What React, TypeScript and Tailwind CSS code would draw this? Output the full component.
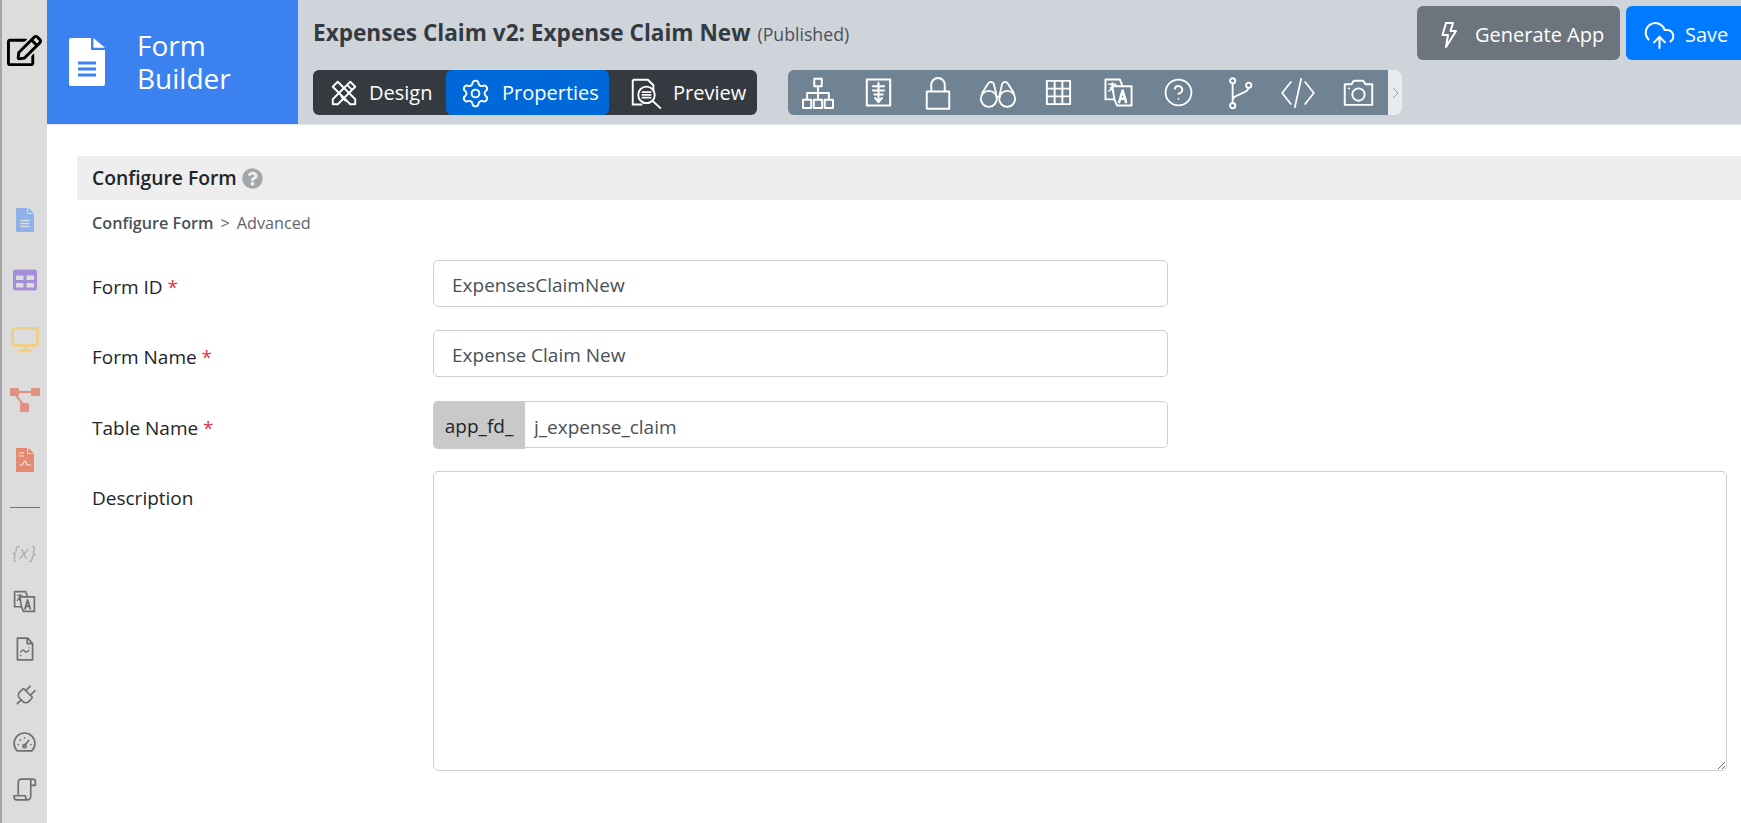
import { CircleHelp, CloudUpload, Plug, Settings } from 'lucide-react';
import { FaQuestionCircle, FaRegEdit, FaTable } from 'react-icons/fa';
import type { ReactNode } from 'react';

const font = { fontFamily: '"Open Sans", "Noto Sans", sans-serif' };

const Line = ({ size = 28, sw = 1.6, children }: { size?: number; sw?: number; children: ReactNode }) => (
  <svg width={size} height={size} viewBox="0 0 24 24" fill="none" stroke="currentColor" strokeWidth={sw} strokeLinecap="round" strokeLinejoin="round">
    {children}
  </svg>
);

const FileIcon = ({ size, color, lines }: { size: number; color: string; lines: string }) => (
  <svg width={size * 0.75} height={size} viewBox="0 0 18 24">
    <path d="M0 1a1 1 0 0 1 1-1h10v6h7v17a1 1 0 0 1-1 1H1a1 1 0 0 1-1-1z" fill={color} />
    <path d="M12.2 0 18 4.9H12.2z" fill={color} />
    <path d="M4.5 12.5h9M4.5 15.5h9M4.5 18.5h9" stroke={lines} strokeWidth="1.5" />
  </svg>
);

const Translate = ({ size = 28, sw = 1.5 }: { size?: number; sw?: number }) => (
  <Line size={size} sw={sw}>
    <path d="M9 17H2.500V2.500H13L15 7.500" />
    <path d="M9 17 7.500 7.500H21.500V21.500H11z" />
    <path d="M5 6h5M7.500 5v1.500c0 2-1 3.500-2.500 4.500M6 8.500c.8 1.200 1.500 2 2.500 2.500" strokeWidth="1.100" />
    <path d="M12.500 19l2.500-8.500 2.500 8.500M13.500 16.500h3.500" strokeWidth="1.800" />
  </Line>
);

const sidebarTop: ReactNode[] = [
  <FileIcon size={24} color="#8fb2ea" lines="#dcdcdc" />,
  <FaTable size={24} color="#a48fd6" />,
  <svg width="28" height="26" viewBox="0 0 28 26" fill="none"><rect x="1.500" y="1.500" width="25" height="17" rx="2" stroke="#efcf88" strokeWidth="3" /><path d="M14 19v4M7 24h14" stroke="#efcf88" strokeWidth="3" /></svg>,
  <svg width="30" height="26" viewBox="0 0 30 26" fill="#e39084"><rect x="0" y="1" width="9" height="8" rx="1" /><rect x="21" y="1" width="9" height="8" rx="1" /><rect x="10" y="16" width="9" height="9" rx="1" /><path d="M8 4h14v2H8zM7 8l7 9-1.600 1.200-7-9z" /></svg>,
  <svg width="18" height="24" viewBox="0 0 18 24"><path d="M0 0h11v6h7v18H0z" fill="#e38a72" /><path d="M12.200 0 18 4.900h-5.800z" fill="#e38a72" /><path d="M3 5h5M3 8h5M3 17h3c1.500 0 1.500-4 3-4s1 4 2.500 4H15" stroke="#f7e4de" strokeWidth="1.200" fill="none" /></svg>,
];

const sidebarBottom: ReactNode[] = [
  <span className="text-[19px] font-light italic tracking-[1px] text-[#9a9a9a]">{'{x}'}</span>,
  <span className="text-[#6f6f6f]"><Translate size={25} sw={1.600} /></span>,
  <span className="text-[#6f6f6f]"><Line size={26} sw={1.600}><path d="M5 2h9.500L19 7v15H5zM14 2v5h5" /><path d="M8 15c1.500-2.500 2.500-2.500 3.500-1s2 1 4 -.5M15.500 11h.1M8 18h.1" strokeWidth="1.300" /></Line></span>,
  <span className="text-[#6f6f6f]"><Plug size={26} strokeWidth={1.500} className="rotate-45" /></span>,
  <span className="text-[#6f6f6f]"><Line size={25} sw={1.600}><path d="M5 20a10 10 0 1 1 14 0z" /><path d="M12 15l4-5M6 14h.1M8 9.500h.1M12 7.500h.1M18 14h.1" /><circle cx="12" cy="15.500" r="1.500" /></Line></span>,
  <span className="text-[#6f6f6f]"><Line size={25} sw={1.600}><path d="M6 18V5a3 3 0 0 1 3-3h11a2.500 2.500 0 0 1 2.500 2.500V8H18M20 2a2 2 0 0 0-2 2v14.500a3.500 3.500 0 0 1-3.500 3.500H4.500A2.500 2.500 0 0 1 2 19.500V18h11v1.500a2.500 2.500 0 0 0 2 2.500" /></Line></span>,
];

const toolIcons: ReactNode[] = [
  <Line size={36} sw={1.300}><path d="M9.500 2.500h5v5h-5zM2 16.500h5.500v5.500H2zM9.250 16.500h5.500v5.500h-5.500zM16.500 16.500H22v5.500h-5.500zM12 7.500v9M4.750 16.500v-4.500h14.500v4.500" /></Line>,
  <Line size={33} sw={1.500}><path d="M3.500 2.500h17v19h-17z" /><path d="M12 5v13M8 7.500h8M8 10.500h8M9 13.500h6M9.500 16l2.500 3 2.500-3" /></Line>,
  <Line size={36} sw={1.300}><path d="M4.500 11h15v11.500h-15zM7.500 11V6.500a4.500 4.500 0 0 1 9 0V11" /></Line>,
  <Line size={40} sw={1.100}><circle cx="6.500" cy="15.500" r="4.800" /><circle cx="17.500" cy="15.500" r="4.800" /><path d="M11.300 14.500c.6-.7 1.400-.7 2 0M2.500 12 6 6.500c.5-1.500 3-1.500 3.500 0l1.500 6.500M21.500 12 18 6.500c-.5-1.500-3-1.500-3.500 0l-1.500 6.500" /></Line>,
  <Line size={31} sw={1.500}><path d="M3 3h18v18H3zM9 3v18M15 3v18M3 9h18M3 15h18" /></Line>,
  <Translate size={33} sw={1.400} />,
  <CircleHelp size={31} strokeWidth={1.400} />,
  <Line size={35} sw={1.300}><circle cx="8" cy="4" r="1.800" /><circle cx="8" cy="21" r="1.800" /><circle cx="19" cy="7" r="1.800" /><path d="M8 5.800v13.400M19 8.800c0 4-11 4.200-11 8.200" /></Line>,
  <Line size={38} sw={1.100}><path d="M7.500 5 2 12l5.500 7M16.500 5 22 12l-5.500 7M14 3l-4 18" /></Line>,
  <Line size={33} sw={1.400}><path d="M2 6h5l1.500-2.500h7L17 6h5v15H2z" /><circle cx="12" cy="13.500" r="4.500" /><path d="M5 9h.1" /></Line>,
];

const Field = ({ label, required, children }: { label: string; required?: boolean; children: ReactNode }) => (
  <div className="flex">
    <label className="w-[356px] shrink-0 pl-[15px] pt-[13px] text-[19px] leading-[28px] text-[#212529]">
      {label}
      {required && <span className="text-[#dc3545]"> *</span>}
    </label>
    {children}
  </div>
);

const inputClass = "h-[47px] w-[735px] rounded-[5px] border border-[#cfcfcf] bg-white px-[18px] pt-[2px] text-[19px] text-[#495057] outline-none";

export default function App() {
  return (
    <div className="flex h-[823px] w-[1741px] overflow-hidden bg-white" style={font}>
      {/* left icon strip */}
      <aside className="flex w-[47px] shrink-0 flex-col items-center border-l-2 border-[#a6a6a6] bg-[#dcdcdc]">
        <div className="flex h-[190px] w-full items-start justify-center pt-[33px] text-black">
          <FaRegEdit size={35} />
        </div>
        {sidebarTop.map((icon, i) => (
          <div key={i} className="flex h-[60px] items-center justify-center">{icon}</div>
        ))}
        <hr className="my-[17px] w-[30px] border-t border-[#777777]" />
        <div className="mt-[3px] flex flex-col items-center">
          <div className="flex h-[50px] items-center justify-center pb-[2px]">{sidebarBottom[0]}</div>
          {sidebarBottom.slice(1).map((icon, i) => (
            <div key={i} className="flex h-[47px] items-center justify-center">{icon}</div>
          ))}
        </div>
      </aside>

      <div className="flex min-w-0 flex-1 flex-col">
        {/* header */}
        <header className="flex h-[125px] shrink-0 border-b border-[#dee2e6] bg-[#ced4da]">
          <div className="flex h-full w-[251px] shrink-0 items-center gap-[32px] bg-[#3b82f0] pl-[22px] pb-[1px] text-white">
            <FileIcon size={48} color="#ffffff" lines="#3b82f0" />
            <div className="text-[28px] leading-[33px]">Form<br />Builder</div>
          </div>
          <div className="min-w-0 flex-1 pl-[15px]">
            <div className="flex h-[70px] items-start pt-[18px] text-[#343a40]">
              <span className="text-[22.600px] leading-[30px] font-bold">Expenses Claim v2: Expense Claim New</span>
              <span className="ml-[7px] pt-[1px] text-[17.700px] leading-[30px] text-[#495057]">(Published)</span>
            </div>
            <div className="flex h-[45px]">
              <div className="flex w-[444px] rounded-[6px] bg-[#343a40] pt-[1px] text-[20px] text-white">
                <div className="flex w-[133px] items-center gap-[10px] pl-[16px]">
                  <svg width="30" height="30" viewBox="0 0 24 24" fill="none" stroke="currentColor" strokeWidth="1.500" strokeLinejoin="round"><path d="M3 7 7 3l14 14v4h-4z" /><path d="M21 7 17 3 3 17v4h4zM14.500 5.500l4 4M9.500 14.500l4 4" /></svg>
                  Design
                </div>
                <div className="-mt-[1px] flex w-[163px] items-center gap-[11px] rounded-[6px] bg-[#0069d9] pl-[14px] pt-[1px]">
                  <Settings size={31} strokeWidth={1.500} />
                  Properties
                </div>
                <div className="flex flex-1 items-center gap-[10px] pl-[21px]">
                  <svg width="33" height="33" viewBox="0 0 24 24" fill="none" stroke="currentColor" strokeWidth="1.400"><path d="M2 2h11l4 4v4M2 2v18h7" /><circle cx="12" cy="13" r="6" /><path d="M8.500 11h7M8.500 13h7M8.500 15h7M16.500 17.500l6 5.500" /></svg>
                  Preview
                </div>
              </div>
              <div className="ml-[31px] flex w-[614px] rounded-[6px] bg-[#708392] text-white">
                <div className="flex flex-1">
                  {toolIcons.map((icon, i) => (
                    <div key={i} className="flex h-full w-[60px] items-center justify-center">{icon}</div>
                  ))}
                </div>
                <div className="flex w-[14px] items-center justify-center rounded-r-[6px] bg-[#e9ecef] text-[#9aa0a6]">
                  <svg width="7" height="12" viewBox="0 0 7 12" fill="none" stroke="currentColor" strokeWidth="1"><path d="m1 1 5 5-5 5" /></svg>
                </div>
              </div>
            </div>
          </div>
          <div className="flex shrink-0 gap-[6px] pt-[6px]">
            <button className="flex h-[54px] w-[203px] items-center gap-[18px] rounded-[6px] bg-[#6c757d] pl-[24px] pt-[4px] text-[20px] text-white">
              <svg width="16" height="26" viewBox="0 0 16 26" fill="none" stroke="currentColor" strokeWidth="2" strokeLinejoin="round"><path d="M5 1h7L9.500 9H15L5 25l2-12H1.500z" /></svg>
              Generate App
            </button>
            <button className="flex h-[54px] w-[115px] items-center gap-[9px] rounded-l-[6px] bg-[#007bff] pl-[17px] pt-[4px] text-[20px] text-white">
              <CloudUpload size={33} strokeWidth={1.500} />
              Save
            </button>
          </div>
        </header>

        {/* form */}
        <main className="min-h-0 flex-1 pl-[30px] pr-[14px] pt-[31px]">
          <div className="-mr-[14px] flex h-[44px] items-center gap-[5px] bg-[#eeeeee] pl-[15px] text-[19.300px] font-semibold text-[#212529]">
            Configure Form
            <FaQuestionCircle size={21} color="#a3a7ab" />
          </div>
          <div className="flex h-[46px] items-center pl-[15px] text-[16.200px] text-[#5f6468]">
            <span className="font-semibold text-[#495057]">Configure Form</span>
            <span className="mx-[7px]">&gt;</span>
            Advanced
          </div>
          <div className="mt-[14px] flex flex-col gap-[23px]">
            <Field label="Form ID" required>
              <input className={inputClass} defaultValue="ExpensesClaimNew" readOnly />
            </Field>
            <Field label="Form Name" required>
              <input className={inputClass} defaultValue="Expense Claim New" readOnly />
            </Field>
            <div className="mt-[1px]">
              <Field label="Table Name" required>
                <div className="flex h-[48px] w-[735px] text-[19px]">
                  <span className="flex w-[92px] items-center justify-center rounded-l-[5px] bg-[#c9c9c9] pt-[2px] text-[#212529]">app_fd_</span>
                  <input className="h-[47px] min-w-0 flex-1 rounded-r-[5px] border border-l-0 border-[#cfcfcf] bg-white px-[9px] pt-[4px] text-[#495057] outline-none" defaultValue="j_expense_claim" readOnly />
                </div>
              </Field>
            </div>
            <div className="-mt-[1px]">
              <Field label="Description">
                <textarea className="h-[300px] flex-1 rounded-[5px] border border-[#cfcfcf] bg-white outline-none" readOnly />
              </Field>
            </div>
          </div>
        </main>
      </div>
    </div>
  );
}
